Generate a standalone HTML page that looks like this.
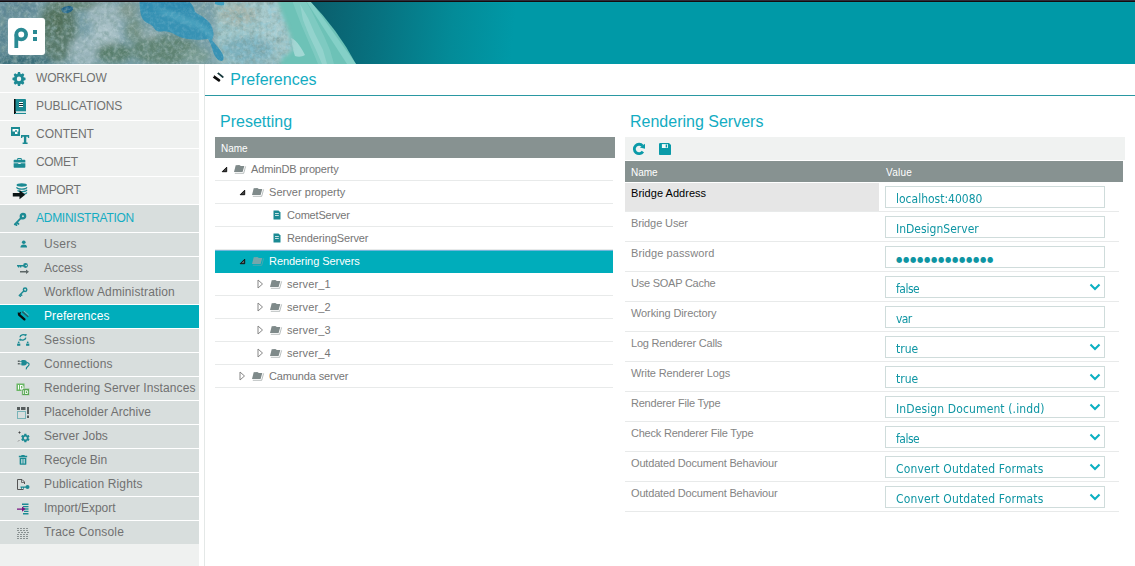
<!DOCTYPE html><html><head><meta charset="utf-8"><title>Preferences</title><style>
*{box-sizing:border-box;margin:0;padding:0}
html,body{width:1135px;height:566px;overflow:hidden;background:#fff;font-family:"Liberation Sans",Arial,sans-serif;}
#hdr{position:absolute;left:0;top:0;width:1135px;height:64px;overflow:hidden;background:#0099a7}
#hdr svg{position:absolute;left:0;top:0}
#logo{position:absolute;left:8px;top:18px;width:37px;height:37px;background:#fff;border-radius:3px}
#side{position:absolute;left:0;top:64px;width:199px;height:502px;background:#eff1f0}
.mi{position:relative;height:28px;border-top:1px solid #fff;background:#eff1f0;color:#717171;font-size:12px;line-height:26px;padding-left:36px;white-space:nowrap;letter-spacing:-.15px}
.mi svg,.si svg{position:absolute}
.mi.open{background:#d8dedd;color:#13acc2}
.si{position:relative;height:24px;border-top:1px solid #fff;background:#d8dedd;color:#717171;font-size:12px;line-height:22px;padding-left:44px;white-space:nowrap;letter-spacing:.15px}
.si.act{background:#00adbb;color:#fff}
#vline{position:absolute;left:204px;top:64px;width:1px;height:502px;background:#e4e8e7}
#title{position:absolute;left:230.300px;top:70px;font-size:16px;line-height:20px;color:#13acc2;white-space:nowrap}
#tline{position:absolute;left:205px;top:95px;width:930px;height:1px;background:#2a98a2}
.h2{position:absolute;top:112px;font-size:16px;line-height:20px;color:#13acc2;white-space:nowrap}
.gh{position:absolute;background:#879291;color:#fff;font-size:10px;line-height:23px;height:21px;overflow:hidden;white-space:nowrap}
.tr{position:absolute;left:215px;width:398px;height:23px;border-bottom:1px solid #e8eaea;font-size:11px;line-height:22px;color:#767676;white-space:nowrap;letter-spacing:-.08px}
.tr.sel{background:#00adbb;color:#fff;border-bottom:none;width:398px;box-shadow:inset 0 1px 0 #6fb6dc}
.tr svg{position:absolute}
.tr span{position:absolute;top:0}
.pr{position:absolute;left:625px;width:494px;height:30px;border-bottom:1px solid #e8eaea}
.pr .nm{position:absolute;left:0;top:1px;width:254px;height:28px;font-size:11px;line-height:14px;padding:3px 0 0 6px;color:#848484;white-space:nowrap;letter-spacing:-.1px}
.pr.first .nm{background:#e6e6e6;color:#000}
.inp{position:absolute;left:260px;top:4px;width:220px;height:22px;border:1px solid #cfdcdb;background:#fff;font-family:"DejaVu Sans Condensed","DejaVu Sans",sans-serif;font-size:12px;line-height:24px;color:#0e95a3;padding-left:10px;white-space:nowrap;overflow:hidden}
.inp span{display:inline-block;height:24px;transform:scaleY(1.07);transform-origin:0 16px}
.inp svg{position:absolute;right:3px;top:6px}
</style></head><body>
<div id="hdr"><svg width="1135" height="64" viewBox="0 0 1135 64"><defs><linearGradient id="sky" gradientUnits="userSpaceOnUse" x1="312" y1="0" x2="515" y2="20"><stop offset="0" stop-color="#0b5d6b"/><stop offset=".35" stop-color="#077381"/><stop offset=".7" stop-color="#038b98"/><stop offset="1" stop-color="#0099a7"/></linearGradient><filter id="b2" x="-20%" y="-20%" width="140%" height="140%"><feGaussianBlur stdDeviation="2"/></filter><filter id="b3" x="-30%" y="-30%" width="160%" height="160%"><feGaussianBlur stdDeviation="3"/></filter><filter id="b1" x="-10%" y="-10%" width="120%" height="120%"><feGaussianBlur stdDeviation=".7"/></filter><filter id="nz" x="0" y="0" width="100%" height="100%"><feTurbulence type="fractalNoise" baseFrequency=".28" numOctaves="3" seed="7"/><feColorMatrix type="matrix" values="0 0 0 0 .78  0 0 0 0 .88  0 0 0 0 .9  1.6 1.6 0 0 -1.45"/></filter><filter id="nz2" x="0" y="0" width="100%" height="100%"><feTurbulence type="fractalNoise" baseFrequency=".16" numOctaves="4" seed="3"/><feColorMatrix type="matrix" values="0 0 0 0 .2  0 0 0 0 .34  0 0 0 0 .33  0 1.8 1.4 0 -1.42"/></filter><filter id="nzb" x="0" y="0" width="100%" height="100%"><feTurbulence type="fractalNoise" baseFrequency=".22" numOctaves="3" seed="11"/><feColorMatrix type="matrix" values="0 0 0 0 .27  0 0 0 0 .62  0 0 0 0 .76  2.2 0 1.6 0 -1.75"/></filter><clipPath id="ec"><path d="M0 0H309Q338 30 356 64H0z"/></clipPath><mask id="lm" maskUnits="userSpaceOnUse" x="0" y="0" width="360" height="64"><path d="M-10 -10H275C279 8 283 16 286 24 289 32 292 40 293 46 293 52 288 54 284 57 281 60 280 62 279 74H-10z" fill="#fff" filter="url(#b2)"/></mask><clipPath id="sc"><path d="M139.500 0C139.500 6 140 11 141 15 142 19 144 21 147 23 150 24 152 25 154 28 156 31 158 32 162 31.500 166 31 170 32 174 34 178 36 181 37.500 185 38.500 190 39.500 196 40 202 39.500L208 39C210 42 211 45 212 48 213 52 214 55 216 57.500 218 60 220 61.500 222 61 224 60 224 57 222.500 54 221 51 219 48 216 45 214 42.500 212.500 41 212 39.500 213.500 37 214 34 213 31 212.500 27 211 24 208 21 205 18 202 16 198 14 196 13 194.500 11.500 194 9 193.500 6 191 3 187 0z"/></clipPath></defs><rect width="1135" height="64" fill="url(#sky)"/><g clip-path="url(#ec)"><rect width="360" height="64" fill="#6dc2b7"/><path d="M305.500 0h4.500l46 64h-9z" fill="#84d0c7" filter="url(#b1)"/><path d="M292 0h13l6 10 6 12 7 14 6 14 4 14h-16l-5-12-6-14-6-14-5-13z" fill="#8fd2cb" opacity=".5" filter="url(#b1)"/><path d="M300 4l8 14 7 16 8 16 4 14h-5l-6-14-7-15-6-15z" fill="#b5e2df" opacity=".4" filter="url(#b1)"/><path d="M291 38c3 1 6 4 8 7 3 4 5 8 6 10-3 2-7 2-10 1-2-5-3-12-4-18z" fill="#b9e2e0" opacity=".7" filter="url(#b1)"/><g mask="url(#lm)"><rect width="310" height="64" fill="#779ea8"/><rect x="216" width="100" height="64" fill="#9fc4c6" filter="url(#b3)"/><g filter="url(#b3)"><ellipse cx="58" cy="30" rx="19" ry="32" fill="#58796a"/><ellipse cx="56" cy="22" rx="10" ry="12" fill="#4f6e59"/><ellipse cx="80" cy="5" rx="30" ry="5" fill="#638271"/><ellipse cx="18" cy="9" rx="22" ry="9" fill="#5f8794"/><ellipse cx="20" cy="61" rx="32" ry="7" fill="#386c77"/><ellipse cx="3" cy="36" rx="5" ry="24" fill="#55808e"/><ellipse cx="106" cy="16" rx="19" ry="13" fill="#9db7be"/><ellipse cx="84" cy="52" rx="15" ry="16" fill="#9ab5bc"/><ellipse cx="106" cy="36" rx="15" ry="13" fill="#a9c1c7"/><ellipse cx="114" cy="53" rx="18" ry="10" fill="#587e6c"/><ellipse cx="165" cy="50" rx="34" ry="15" fill="#5f8373"/><ellipse cx="134" cy="30" rx="9" ry="12" fill="#729184"/><ellipse cx="128" cy="10" rx="10" ry="9" fill="#7e9890"/><ellipse cx="150" cy="34" rx="9" ry="4" fill="#a0b6b8"/><ellipse cx="238" cy="14" rx="20" ry="11" fill="#a6b6ad"/><ellipse cx="196" cy="56" rx="14" ry="8" fill="#789b91"/><ellipse cx="248" cy="50" rx="26" ry="13" fill="#7aaeba"/><ellipse cx="270" cy="22" rx="12" ry="20" fill="#a7cacd"/></g><path d="M61 9c3-3 8-4 12-2 1 3-2 5-5 6-3 1-6 0-7-4z" fill="#1f6288" filter="url(#b1)"/><rect width="310" height="64" filter="url(#nz2)" opacity=".75"/><rect width="310" height="64" filter="url(#nz)" opacity=".3"/><rect x="218" width="80" height="64" filter="url(#nzb)" opacity=".4"/><g clip-path="url(#sc)"><rect x="130" width="100" height="64" fill="#3792b4"/><path d="M150 2C160 10 176 18 196 24 206 28 210 34 214 40" stroke="#63b6cc" stroke-width="5" fill="none" opacity=".55" filter="url(#b2)"/><path d="M140 0h50l6 10h-50z" fill="#2b86ad" opacity=".6" filter="url(#b2)"/><rect x="135" width="95" height="64" filter="url(#nz)" opacity=".18"/></g><path d="M215 1h9v4c-3 1-6 0-9-1z" fill="#3fa0c0" filter="url(#b1)"/></g></g><rect x="470" y="2" width="665" height="1" fill="#00a3b0" opacity=".5"/><rect width="1135" height="1" fill="#2e2c38"/><rect y="1" width="1135" height="1" fill="#150b0e"/></svg><div id="logo"><svg width="37" height="37" viewBox="0 0 37 37"><g fill="none" stroke="#2a8a94" stroke-width="3.800"><circle cx="13.200" cy="16.500" r="4.900"/><path d="M8.300 16.500V30"/></g><path d="M25 12h4v4h-4zM25 19h4v4h-4z" fill="#2a8a94"/></svg></div></div>
<div id="side">
<div class="mi" style="letter-spacing:-0.16px"><svg style="left:11.200px;top:6px" width="16" height="16" viewBox="-8 -8 16 16"><g fill="#1d8a94" transform="translate(0 -.1) scale(.93 1)"><path d="M-2-4L-1.100-7H1.100L2-4z" transform="rotate(0)"/><path d="M-2-4L-1.100-7H1.100L2-4z" transform="rotate(45)"/><path d="M-2-4L-1.100-7H1.100L2-4z" transform="rotate(90)"/><path d="M-2-4L-1.100-7H1.100L2-4z" transform="rotate(135)"/><path d="M-2-4L-1.100-7H1.100L2-4z" transform="rotate(180)"/><path d="M-2-4L-1.100-7H1.100L2-4z" transform="rotate(225)"/><path d="M-2-4L-1.100-7H1.100L2-4z" transform="rotate(270)"/><path d="M-2-4L-1.100-7H1.100L2-4z" transform="rotate(315)"/><path fill-rule="evenodd" d="M0-5A5 5 0 1 0 0 5 5 5 0 1 0 0-5zM0-2.400A2.400 2.400 0 1 1 0 2.400 2.400 2.400 0 1 1 0-2.400z"/></g></svg>WORKFLOW</div>
<div class="mi" style="letter-spacing:-0.08px"><svg style="left:13px;top:5px" width="14" height="17" viewBox="0 0 14 17"><path d="M1 1h2v15H1z" fill="#0c0c0c"/><path d="M2.500 1h9.500a1 1 0 0 1 1 1v11.500H2.500z" fill="#1b8a93"/><path d="M2.500 13.500H13V15H3.500z" fill="#d5e6e6"/><path d="M2 15h11v1H2z" fill="#1b8a93"/><path d="M6 4h4v1H6zM6 6h4v1H6zM6 8h4v1H6z" fill="#fff"/><path d="M6 5h4v1H6zM6 7h4v1H6z" fill="#0c2a2c"/></svg>PUBLICATIONS</div>
<div class="mi" style="letter-spacing:-0.01px"><svg style="left:10px;top:5px" width="20" height="18" viewBox="0 0 20 18"><path d="M1 1h9v9H1z" fill="#1b8a93"/><path d="M2.500 3h6v2.500H7.500v2.500H5V5.500H2.500z" fill="#fff"/><circle cx="6" cy="5" r="1" fill="#1b8a93"/><path d="M11 9h8.200v3h-1.300v-1.200h-1.600v5.700h1.300V18h-5v-1.500h1.300v-5.700h-1.600V12H11z" fill="#1b8a93"/></svg>CONTENT</div>
<div class="mi" style="letter-spacing:-0.34px"><svg style="left:13.200px;top:9px" width="13" height="10.700" preserveAspectRatio="none" viewBox="0 0 14 12"><path d="M4.500 2V1a1 1 0 0 1 1-1h3a1 1 0 0 1 1 1v1h3a.8.800 0 0 1 .8.800V5H.700V2.800A.8.800 0 0 1 1.500 2zM5.500 1v1h3V1zM.7 5.800h5v1h2.600v-1h5V10.200a.8.800 0 0 1-.8.800h-11a.8.800 0 0 1-.8-.8z" fill="#1b8a93"/></svg>COMET</div>
<div class="mi" style="letter-spacing:-0.33px"><svg style="left:11px;top:6px" width="18" height="18" viewBox="0 0 18 18"><ellipse cx="10.750" cy="2" rx="5.200" ry="1.700" fill="#1b8a93"/><g fill="none" stroke="#1b8a93" stroke-width="1.300"><path d="M5.600 4.300c.4 1.200 2.500 1.900 5.150 1.900s4.750-.7 5.150-1.900"/><path d="M6.500 7.400c1 .8 2.500 1.200 4.250 1.200 2.650 0 4.750-.7 5.150-1.900"/><path d="M12 11.200c2-.2 3.500-.8 3.900-1.800"/></g><path d="M1.800 10h6.700V7l5.700 4.700-5.700 4.600v-2.900H1.800z" fill="#0b1516"/></svg>IMPORT</div>
<div class="mi open" style="letter-spacing:-0.27px"><svg style="left:12.500px;top:6.500px" width="14.500" height="14.500" viewBox="0 0 16 16"><g fill="none" stroke="#1b8a93" stroke-linecap="round"><circle cx="11" cy="4.600" r="2.400" stroke-width="2.600"/><path d="M9 6.600L2 13.600M4.200 11.400l1.800 1.800M2.400 13.200L3.800 14.600" stroke-width="2"/></g></svg>ADMINISTRATION</div>
<div class="si" style="letter-spacing:0.3px"><svg style="left:19.700px;top:6.500px" width="7.500" height="8.500" viewBox="0 0 9 10"><circle cx="4.500" cy="2.600" r="2.200" fill="#1b8a93"/><path d="M0.500 9c0-2.400 1.600-3.600 4-3.600s4 1.200 4 3.600z" fill="#1b8a93"/></svg>Users</div>
<div class="si" style="letter-spacing:0.02px"><svg style="left:16px;top:5px" width="14" height="14" viewBox="0 0 14 14"><circle cx="9.500" cy="3.500" r="2.400" fill="#1b8a93"/><circle cx="10.200" cy="3.500" r=".8" fill="#d8dedd"/><path d="M1 3h7v1.400H1zM2 4.400h1.300v1H2zM4 4.400h1.300v1H4z" fill="#1b8a93"/><path d="M4 9h6V7.500l3 2.200-3 2.200v-1.500H4z" fill="#5c6666"/></svg>Access</div>
<div class="si" style="letter-spacing:0.13px"><svg style="left:17.500px;top:5.500px" width="10.500" height="10.500" viewBox="0 0 16 16"><g fill="none" stroke="#1b8a93" stroke-width="2.200" stroke-linecap="round"><circle cx="10.800" cy="4.200" r="2.600"/><path d="M8.800 6.200L2 13M4 11l1.700 1.700M2.300 12.700L3.600 14"/></g></svg>Workflow Administration</div>
<div class="si act" style="letter-spacing:0.07px"><svg style="left:17px;top:5px" width="13" height="13" viewBox="0 0 13 13"><g stroke-linecap="round" fill="none"><path d="M2 4.600L7.400 9.400" stroke="#0c0c0c" stroke-width="2.300"/><path d="M1.200 3L2.600 5.400M3.300 2.800L2.200 4" stroke="#0c0c0c" stroke-width="1.300"/><path d="M5.600 2L10.800 6.600" stroke="#2f5a5e" stroke-width="1.400"/><path d="M7.400 1.300L11.400 4.900" stroke="#8fc3c6" stroke-width=".9"/></g></svg>Preferences</div>
<div class="si" style="letter-spacing:0.34px"><svg style="left:16px;top:4px" width="15" height="15" viewBox="0 0 15 15"><g fill="none" stroke="#1b8a93" stroke-width="1.300"><path d="M4 4.200A3.200 2.600 0 0 1 9.600 2.600"/><path d="M9.800 4.600A3.200 2.600 0 0 1 4.200 6.200"/></g><g fill="#1b8a93"><path d="M8.600 1l2.600.6-1.700 2z"/><path d="M5.200 7.800L2.600 7.200l1.700-2z"/><circle cx="2.700" cy="9.300" r=".9"/><path d="M1.100 10.600h3.200v2.200H1.100z"/><circle cx="11.700" cy="9.300" r=".9"/><path d="M10.100 10.600h3.200v2.200h-3.200z"/></g></svg>Sessions</div>
<div class="si" style="letter-spacing:0.18px"><svg style="left:16px;top:5px" width="15" height="15" viewBox="0 0 15 15"><path d="M1.800 2.500h2v1.400h-2zM1.800 5h2v1.400h-2z" fill="#5c6666"/><path d="M5.500 2h2.500c1.900 0 2.900 1 2.900 2.700S9.900 7.400 8 7.400H5.500z" fill="#1b8a93"/><path d="M4.300 2.900h1.500v1h-1.500zM4.300 5.400h1.500v1h-1.500z" fill="#1b8a93"/><path d="M10.600 4.300c2.600.4 3.300 2.300 1.600 3.700-1.300 1-2.300 1.600-1.900 3.300" fill="none" stroke="#1b8a93" stroke-width="1.200"/></svg>Connections</div>
<div class="si" style="letter-spacing:0.11px"><svg style="left:16px;top:6px" width="14" height="13" viewBox="0 0 14 13"><path d="M.5.500h8v7.500h-8z" fill="#6ab765"/><path d="M5.800 5.300h7.700v7.200H5.800z" fill="#58a653" stroke="#d8dedd" stroke-width=".7"/><path d="M2 2h1v4.500H2zM4 2h1.500c1.500 0 2 .8 2 2.200S7 6.500 5.500 6.500H4zM5 3v2.500h.5c.7 0 1-.4 1-1.300S6.200 3 5.500 3z" fill="#fff"/><path d="M7.200 7.300h.9v3.700h-.9zM9 7.300h1.400c1.300 0 1.800.6 1.800 1.850s-.5 1.850-1.800 1.850H9zM9.900 8.200v1.900h.5c.6 0 .8-.3.800-.95s-.2-.95-.8-.95z" fill="#eaf5e9"/></svg>Rendering Server Instances</div>
<div class="si" style="letter-spacing:0.05px"><svg style="left:16px;top:5px" width="14" height="14" viewBox="0 0 14 14"><path d="M1 1h3v3H1zM5 1h4.500v3H5zM11 1h2v7h-2zM11 9.500h2V12h-2z" fill="#565d5d"/><path d="M1.500 5.500h8v7h-8z" fill="none" stroke="#1b8a93" stroke-width="1" stroke-dasharray="1 1"/></svg>Placeholder Archive</div>
<div class="si" style="letter-spacing:-0.02px"><svg style="left:17px;top:5px" width="14" height="14" viewBox="0 0 14 14"><g transform="translate(3.200 2.800) scale(.43)"><path fill="#1b8a93" d="M19.4 13c.04-.33.06-.66.06-1s-.02-.67-.07-1l2.100-1.650c.2-.15.24-.42.130-.64l-2-3.460c-.12-.22-.38-.3-.61-.22l-2.490 1c-.52-.4-1.080-.73-1.690-.98l-.38-2.650A.5.500 0 0 0 14 2h-4c-.25 0-.46.180-.49.420l-.38 2.650c-.61.250-1.170.590-1.690.98l-2.490-1c-.23-.09-.49 0-.61.220l-2 3.460c-.13.220-.07.490.12.640L4.570 11c-.04.330-.07.660-.07 1s.03.670.07 1l-2.110 1.650c-.19.150-.24.420-.12.640l2 3.460c.12.220.38.300.61.220l2.490-1c.52.400 1.080.730 1.690.980l.38 2.650c.03.240.24.420.49.420h4c.25 0 .46-.18.49-.42l.38-2.650c.61-.25 1.170-.59 1.690-.98l2.490 1c.23.090.49 0 .61-.22l2-3.460c.12-.22.070-.49-.12-.64L19.400 13zM12 15.500A3.500 3.500 0 1 1 12 8.500a3.500 3.500 0 0 1 0 7z"/></g><path d="M1.500 2.500h2M2.500 1.500v2" stroke="#444" stroke-width="1"/><path d="M1 11.500l1.500-1.500" stroke="#777" stroke-width=".8"/></svg>Server Jobs</div>
<div class="si" style="letter-spacing:-0.02px"><svg style="left:17.800px;top:4.800px" width="10" height="11.700" viewBox="0 0 12 14"><path d="M4 1.200h4v1H11v1.600H1V2.200h3z" fill="#1b8a93"/><path d="M2 4.500h8v7.500a1 1 0 0 1-1 1H3a1 1 0 0 1-1-1z" fill="#1b8a93"/><path d="M4 6h1.300v5.500H4zM6.700 6H8v5.500H6.700z" fill="#e8efef"/></svg>Recycle Bin</div>
<div class="si" style="letter-spacing:0.14px"><svg style="left:16px;top:5px" width="15" height="14" viewBox="0 0 15 14"><path d="M1.500 1.500h4.500l2.500 2.500v2M1.500 1.500v10h6" fill="none" stroke="#555" stroke-width="1"/><path d="M5.500 1.500v3h3" fill="none" stroke="#555" stroke-width=".8"/><circle cx="11.500" cy="9" r="2" fill="#1b8a93"/><path d="M4.500 8.500h6v1.200h-6zM5 9.700h1v1H5zM7 9.700h1v1H7z" fill="#1b8a93"/></svg>Publication Rights</div>
<div class="si" style="letter-spacing:-0.04px"><svg style="left:16px;top:5px" width="14" height="14" viewBox="0 0 14 14"><g fill="#1b8a93"><path d="M6 1.500h6.500v1.500H6zM7 4h5.500v1.300H7zM8 8.800h4.500v1.300H8zM7 11h5.500v1.400H7z"/><path d="M8 6.300h4.500v1.400H8z"/></g><path d="M1 6.400h5V4.500l3.500 2.600L6 9.700V7.800H1z" fill="#7a1480"/></svg>Import/Export</div>
<div class="si" style="letter-spacing:0.19px"><svg style="left:16px;top:5px" width="14" height="14" viewBox="0 0 14 14"><g stroke="#8a9292" stroke-width="1" stroke-dasharray="2 1"><path d="M1 2.500h12M1 4.500h12M2 6.500h11M1 8.500h12M1 10.500h11M1 12.500h12"/></g></svg>Trace Console</div>
</div>
<div id="vline"></div>
<svg style="position:absolute;left:212px;top:71px" width="13" height="13" viewBox="0 0 13 13"><g stroke-linecap="round" fill="none"><path d="M2.200 5.800L7 9.300" stroke="#0c0c0c" stroke-width="2.700"/><path d="M6 2.200L10.800 6" stroke="#17383c" stroke-width="1.700"/></g><circle cx="1.200" cy="4.900" r=".9" fill="#fff"/><circle cx="5.500" cy="1.500" r=".7" fill="#fff"/></svg>
<div id="title">Preferences</div><div id="tline"></div>
<div class="h2" style="left:220px">Presetting</div>
<div class="h2" style="left:630px">Rendering Servers</div>
<div class="gh" style="left:215px;top:137px;width:400px;padding-left:6px">Name</div>
<div class="tr" style="top:158px"><svg style="left:6px;top:8px" width="7" height="7" viewBox="0 0 7 7"><path d="M5.700 1.200v4.500H1.200z" fill="#444" stroke="#111" stroke-width="1" stroke-linejoin="round"/></svg><svg style="left:19px;top:7px" width="13" height="10" viewBox="0 0 13 10"><path d="M11.600 1.400L9.700 8.300H.800" fill="none" stroke="#7f8a8a" stroke-width="1" opacity=".55"/><path d="M1.700.2L5.300 0l1.600 1h3.400L8.600 6.900H0z" fill="#7f8a8a"/></svg><span style="left:36px;letter-spacing:-0.14px">AdminDB property</span></div>
<div class="tr" style="top:181px"><svg style="left:24px;top:8px" width="7" height="7" viewBox="0 0 7 7"><path d="M5.700 1.200v4.500H1.200z" fill="#444" stroke="#111" stroke-width="1" stroke-linejoin="round"/></svg><svg style="left:37px;top:7px" width="13" height="10" viewBox="0 0 13 10"><path d="M11.600 1.400L9.700 8.300H.800" fill="none" stroke="#7f8a8a" stroke-width="1" opacity=".55"/><path d="M1.700.2L5.300 0l1.600 1h3.400L8.600 6.900H0z" fill="#7f8a8a"/></svg><span style="left:54px;letter-spacing:0.04px">Server property</span></div>
<div class="tr" style="top:204px"><svg style="left:58px;top:6px" width="8" height="10" viewBox="0 0 8 10"><path d="M.5.500h5L7.500 2.500v7h-7z" fill="#1b8a93"/><path d="M2 3.200h3.800v.9H2zM2 5.200h3.800v.9H2z" fill="#fff"/></svg><span style="left:72px;letter-spacing:-0.2px">CometServer</span></div>
<div class="tr" style="top:227px"><svg style="left:58px;top:6px" width="8" height="10" viewBox="0 0 8 10"><path d="M.5.500h5L7.500 2.500v7h-7z" fill="#1b8a93"/><path d="M2 3.200h3.800v.9H2zM2 5.200h3.800v.9H2z" fill="#fff"/></svg><span style="left:72px;letter-spacing:-0.12px">RenderingServer</span></div>
<div class="tr sel" style="top:250px"><svg style="left:24px;top:8px" width="7" height="7" viewBox="0 0 7 7"><path d="M5.700 1.200v4.500H1.200z" fill="#5a6a6c" stroke="#111" stroke-width="1" stroke-linejoin="round"/></svg><svg style="left:37px;top:7px" width="13" height="10" viewBox="0 0 13 10"><path d="M11.600 1.400L9.700 8.300H.800" fill="none" stroke="#76a6ab" stroke-width="1" opacity=".55"/><path d="M1.700.2L5.300 0l1.600 1h3.400L8.600 6.900H0z" fill="#76a6ab"/></svg><span style="left:54px;letter-spacing:-0.06px">Rendering Servers</span></div>
<div class="tr" style="top:273px"><svg style="left:41.5px;top:6px" width="7" height="10" viewBox="0 0 7 10"><path d="M1 1l4.500 4L1 9z" fill="#fff" stroke="#868686" stroke-width="1"/></svg><svg style="left:55px;top:7px" width="13" height="10" viewBox="0 0 13 10"><path d="M11.600 1.400L9.700 8.300H.800" fill="none" stroke="#7f8a8a" stroke-width="1" opacity=".55"/><path d="M1.700.2L5.300 0l1.600 1h3.400L8.600 6.900H0z" fill="#7f8a8a"/></svg><span style="left:72px;letter-spacing:0.1px">server_1</span></div>
<div class="tr" style="top:296px"><svg style="left:41.5px;top:6px" width="7" height="10" viewBox="0 0 7 10"><path d="M1 1l4.500 4L1 9z" fill="#fff" stroke="#868686" stroke-width="1"/></svg><svg style="left:55px;top:7px" width="13" height="10" viewBox="0 0 13 10"><path d="M11.600 1.400L9.700 8.300H.800" fill="none" stroke="#7f8a8a" stroke-width="1" opacity=".55"/><path d="M1.700.2L5.300 0l1.600 1h3.400L8.600 6.900H0z" fill="#7f8a8a"/></svg><span style="left:72px;letter-spacing:0.1px">server_2</span></div>
<div class="tr" style="top:319px"><svg style="left:41.5px;top:6px" width="7" height="10" viewBox="0 0 7 10"><path d="M1 1l4.500 4L1 9z" fill="#fff" stroke="#868686" stroke-width="1"/></svg><svg style="left:55px;top:7px" width="13" height="10" viewBox="0 0 13 10"><path d="M11.600 1.400L9.700 8.300H.800" fill="none" stroke="#7f8a8a" stroke-width="1" opacity=".55"/><path d="M1.700.2L5.300 0l1.600 1h3.400L8.600 6.900H0z" fill="#7f8a8a"/></svg><span style="left:72px;letter-spacing:0.1px">server_3</span></div>
<div class="tr" style="top:342px"><svg style="left:41.5px;top:6px" width="7" height="10" viewBox="0 0 7 10"><path d="M1 1l4.500 4L1 9z" fill="#fff" stroke="#868686" stroke-width="1"/></svg><svg style="left:55px;top:7px" width="13" height="10" viewBox="0 0 13 10"><path d="M11.600 1.400L9.700 8.300H.800" fill="none" stroke="#7f8a8a" stroke-width="1" opacity=".55"/><path d="M1.700.2L5.300 0l1.600 1h3.400L8.600 6.900H0z" fill="#7f8a8a"/></svg><span style="left:72px;letter-spacing:0.1px">server_4</span></div>
<div class="tr" style="top:365px"><svg style="left:23.5px;top:6px" width="7" height="10" viewBox="0 0 7 10"><path d="M1 1l4.500 4L1 9z" fill="#fff" stroke="#868686" stroke-width="1"/></svg><svg style="left:37px;top:7px" width="13" height="10" viewBox="0 0 13 10"><path d="M11.600 1.400L9.700 8.300H.800" fill="none" stroke="#7f8a8a" stroke-width="1" opacity=".55"/><path d="M1.700.2L5.300 0l1.600 1h3.400L8.600 6.900H0z" fill="#7f8a8a"/></svg><span style="left:54px;letter-spacing:-0.14px">Camunda server</span></div>
<div style="position:absolute;left:625px;top:137px;width:500px;height:23px;background:#f0f2f1"></div>
<svg style="position:absolute;left:632px;top:142px" width="14" height="14" viewBox="0 0 14 14"><path d="M10.600 3.900A4.700 4.700 0 1 0 10.900 9.600" fill="none" stroke="#0a9aa8" stroke-width="2.800"/><path d="M13 1.700v5.100L7.900 5.500z" fill="#0a9aa8"/></svg>
<svg style="position:absolute;left:659px;top:142.850px" width="12" height="12.200" viewBox="0 0 12 12.200"><path d="M1.200 0h8.800L12 2v9a1.200 1.200 0 0 1-1.200 1.200H1.200A1.200 1.200 0 0 1 0 11V1.200A1.200 1.200 0 0 1 1.200 0z" fill="#0a9aa8"/><path d="M2.900 1.100h6v3.900h-6z" fill="#f4fbfb"/><path d="M6.700 1.400h1.300v3.200H6.700z" fill="#0a9aa8"/></svg>
<div class="gh" style="left:625px;top:161px;width:498px;padding-left:6px">Name<span style="position:absolute;left:261px;letter-spacing:.25px">Value</span></div>
<div class="pr first" style="top:182px"><div class="nm" style="letter-spacing:0.04px">Bridge Address</div><div class="inp"><span>localhost:40080</span></div></div>
<div class="pr" style="top:212px"><div class="nm" style="letter-spacing:-0.11px">Bridge User</div><div class="inp"><span>InDesignServer</span></div></div>
<div class="pr" style="top:242px"><div class="nm" style="letter-spacing:0.1px">Bridge password</div><div class="inp"><span style="font-size:8px;letter-spacing:.72px;transform:none;position:relative;top:-1px">●●●●●●●●●●●●●●</span></div></div>
<div class="pr" style="top:272px"><div class="nm" style="letter-spacing:-0.24px">Use SOAP Cache</div><div class="inp"><span style="letter-spacing:-0.5px">false</span><svg width="12" height="8" viewBox="0 0 12 8"><path d="M1.500 1.500L6 6l4.500-4.500" fill="none" stroke="#0bb0c2" stroke-width="2.100"/></svg></div></div>
<div class="pr" style="top:302px"><div class="nm" style="letter-spacing:-0.1px">Working Directory</div><div class="inp"><span style="letter-spacing:-0.6px">var</span></div></div>
<div class="pr" style="top:332px"><div class="nm" style="letter-spacing:-0.2px">Log Renderer Calls</div><div class="inp"><span>true</span><svg width="12" height="8" viewBox="0 0 12 8"><path d="M1.500 1.500L6 6l4.500-4.500" fill="none" stroke="#0bb0c2" stroke-width="2.100"/></svg></div></div>
<div class="pr" style="top:362px"><div class="nm" style="letter-spacing:-0.12px">Write Renderer Logs</div><div class="inp"><span>true</span><svg width="12" height="8" viewBox="0 0 12 8"><path d="M1.500 1.500L6 6l4.500-4.500" fill="none" stroke="#0bb0c2" stroke-width="2.100"/></svg></div></div>
<div class="pr" style="top:392px"><div class="nm" style="letter-spacing:-0.22px">Renderer File Type</div><div class="inp"><span style="letter-spacing:0.12px">InDesign Document (.indd)</span><svg width="12" height="8" viewBox="0 0 12 8"><path d="M1.500 1.500L6 6l4.500-4.500" fill="none" stroke="#0bb0c2" stroke-width="2.100"/></svg></div></div>
<div class="pr" style="top:422px"><div class="nm" style="letter-spacing:-0.22px">Check Renderer File Type</div><div class="inp"><span style="letter-spacing:-0.5px">false</span><svg width="12" height="8" viewBox="0 0 12 8"><path d="M1.500 1.500L6 6l4.500-4.500" fill="none" stroke="#0bb0c2" stroke-width="2.100"/></svg></div></div>
<div class="pr" style="top:452px"><div class="nm" style="letter-spacing:-0.17px">Outdated Document Behaviour</div><div class="inp"><span style="letter-spacing:0.15px">Convert Outdated Formats</span><svg width="12" height="8" viewBox="0 0 12 8"><path d="M1.500 1.500L6 6l4.500-4.500" fill="none" stroke="#0bb0c2" stroke-width="2.100"/></svg></div></div>
<div class="pr" style="top:482px"><div class="nm" style="letter-spacing:-0.17px">Outdated Document Behaviour</div><div class="inp"><span style="letter-spacing:0.15px">Convert Outdated Formats</span><svg width="12" height="8" viewBox="0 0 12 8"><path d="M1.500 1.500L6 6l4.500-4.500" fill="none" stroke="#0bb0c2" stroke-width="2.100"/></svg></div></div>
</body></html>
